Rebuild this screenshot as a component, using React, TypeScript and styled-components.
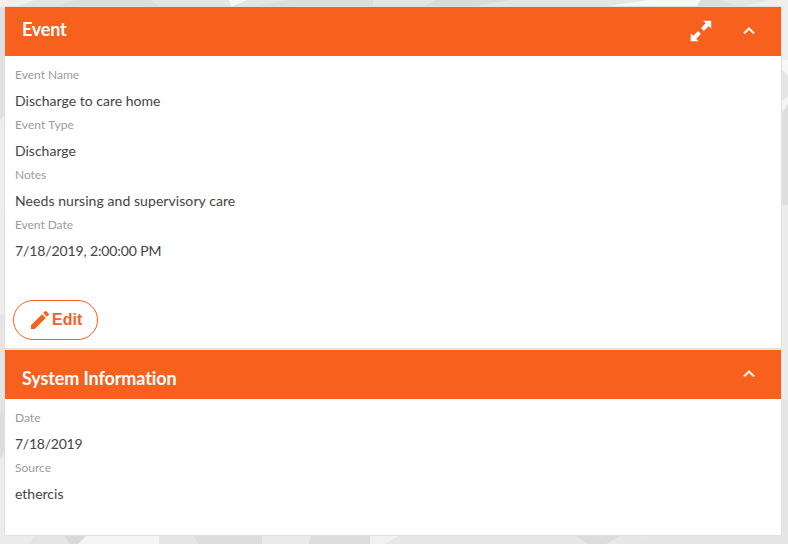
import React from 'react';
import styled, { createGlobalStyle } from 'styled-components';

const GlobalStyle = createGlobalStyle`
  * { box-sizing: border-box; }
  body { margin: 0; background: #e5e5e5; font-family: Lato, "Liberation Sans", sans-serif; font-variant-ligatures: none; }
`;

const Page = styled.main`
  position: relative;
  width: 788px;
  height: 544px;
  padding: 6px 6px 8px 4px;
  overflow: hidden;
`;

const Backdrop = styled.svg`
  position: absolute;
  inset: 0;
  z-index: -1;
`;

const Card = styled.article`
  height: 530px;
  border: 1px solid #e0e0e0;
  border-radius: 2px;
  background: #fff;
`;

const Header = styled.header`
  display: flex;
  align-items: center;
  height: 49px;
  padding: 0 22px 0 16px;
  background: #f7601d;
  color: #fff;
`;

const Title = styled.h2<{ $top?: number; $bottom?: number; $spacing: number }>`
  flex: 1;
  margin: 0;
  padding: ${(p) => p.$top ?? 0}px 0 ${(p) => p.$bottom ?? 0}px 1px;
  font-size: 18px;
  font-weight: 700;
  line-height: 24px;
  letter-spacing: ${(p) => p.$spacing}px;
`;

const HeaderButton = styled.button<{ $gap?: number; $lift?: number }>`
  display: flex;
  padding: 0;
  margin: 0 ${(p) => p.$gap ?? 0}px ${(p) => p.$lift ?? 0}px 0;
  border: 0;
  background: none;
  color: inherit;
`;

const Details = styled.dl<{ $height: number }>`
  height: ${(p) => p.$height}px;
  margin: 0;
  padding: 7px 10px 0;
`;

const Field = styled.div`
  height: 50px;
`;

const Label = styled.dt<{ $spacing: number }>`
  height: 24px;
  color: #9b9b9b;
  font-size: 12px;
  line-height: 24px;
  letter-spacing: ${(p) => p.$spacing}px;
`;

const Value = styled.dd<{ $spacing: number }>`
  margin: 0;
  color: #444;
  font-size: 14px;
  line-height: 28px;
  letter-spacing: ${(p) => p.$spacing}px;
`;

const Actions = styled.div`
  height: 58px;
  padding: 8px 8px 0;
  border-bottom: 2px solid #e2e2e2;
`;

const EditButton = styled.button`
  display: flex;
  align-items: center;
  width: 85px;
  height: 40px;
  padding: 0 0 0 14px;
  border: 1px solid #f7601d;
  border-radius: 20px;
  background: #fff;
  color: #f7601d;
  font: 700 16px "Liberation Sans", sans-serif;
`;

const Chevron = () => (
  <svg width="20" height="20" viewBox="0 0 24 24" fill="currentColor">
    <path d="M12 7.6l-6.6 6.6 1.4 1.4L12 10.4l5.2 5.2 1.4-1.4z" stroke="currentColor" strokeWidth=".4" />
  </svg>
);

const Expand = () => (
  <svg width="22" height="22" viewBox="0 0 22 22" fill="currentColor">
    <path d="M13.2.7h8v8l-2.5-2.4-4.9 4.6-2.8-2.8 4.7-4.9z" />
    <path d="M.7 13.2v8h8l-2.4-2.5 4.6-4.9-2.8-2.8-4.9 4.7z" />
  </svg>
);

const Pencil = () => (
  <svg width="24" height="24" viewBox="0 0 24 24" fill="currentColor">
    <path d="M3 17.25V21h3.75L17.81 9.94l-3.75-3.75zM20.71 7.04a1 1 0 0 0 0-1.41l-2.34-2.34a1 1 0 0 0-1.41 0l-1.83 1.83 3.75 3.75z" />
  </svg>
);

type Entry = { label: string; value: string; labelSpacing: number; valueSpacing: number };

const eventFields: Entry[] = [
  { label: 'Event Name', value: 'Discharge to care home', labelSpacing: 0, valueSpacing: 0.02 },
  { label: 'Event Type', value: 'Discharge', labelSpacing: 0.1, valueSpacing: 0 },
  { label: 'Notes', value: 'Needs nursing and supervisory care', labelSpacing: -0.05, valueSpacing: 0.07 },
  { label: 'Event Date', value: '7/18/2019, 2:00:00 PM', labelSpacing: -0.05, valueSpacing: -0.12 },
];

const systemFields: Entry[] = [
  { label: 'Date', value: '7/18/2019', labelSpacing: 0, valueSpacing: -0.25 },
  { label: 'Source', value: 'ethercis', labelSpacing: 0, valueSpacing: 0 },
];

const Fields = ({ entries, height }: { entries: Entry[]; height: number }) => (
  <Details $height={height}>
    {entries.map((e) => (
      <Field key={e.label}>
        <Label $spacing={e.labelSpacing}>{e.label}</Label>
        <Value $spacing={e.valueSpacing}>{e.value}</Value>
      </Field>
    ))}
  </Details>
);

const facets: [string, string][] = [
  ['0,0 35,0 15,7 0,7', '#f0f0f0'],
  ['52,7 76,0 150,0 160,7', '#dddddd'],
  ['229,0 247,0 231,7', '#f8f8f8'],
  ['250,7 290,0 373,0 373,7', '#dddddd'],
  ['423,7 436,0 510,0 470,7', '#dadada'],
  ['600,7 650,0 700,0 697,7', '#f7f7f7'],
  ['697,7 701,0 720,0 740,7', '#dddddd'],
  ['740,7 770,0 788,0 788,7', '#efefef'],
  ['0,7 5,7 5,115 0,120', '#e0e0e0'],
  ['0,120 5,115 5,208 0,216', '#eeeeee'],
  ['0,216 5,210 5,315 0,315', '#ededed'],
  ['0,415 5,400 5,453 0,458', '#dddddd'],
  ['0,458 5,453 5,544 0,544', '#ececec'],
  ['781,7 788,7 788,60 781,60', '#eeeeee'],
  ['781,60 788,60 788,76 781,68', '#f7f7f7'],
  ['781,102 788,96 788,104 781,115', '#f4f4f4'],
  ['781,115 788,104 788,205 781,205', '#dfdfdf'],
  ['781,205 788,205 788,400 781,400', '#ececec'],
  ['0,535 36,535 28,544 0,544', '#ececec'],
  ['64,535 86,535 78,544 70,544', '#d9d9d9'],
  ['78,544 88,535 159,535 159,544', '#f5f5f5'],
  ['193,535 262,535 262,544 198,544', '#dddddd'],
  ['262,535 311,535 309,544 262,544', '#eaeaea'],
  ['311,535 370,535 370,544 309,544', '#dddddd'],
  ['370,535 400,535 385,544 370,544', '#f1f1f1'],
  ['400,535 650,535 640,544 385,544', '#e7e7e7'],
  ['574,535 622,535 606,544 588,544', '#dcdcdc'],
];

export default function App() {
  return (
    <Page>
      <GlobalStyle />
      <Backdrop width="788" height="544" aria-hidden="true">
        <rect width="788" height="544" fill="#e5e5e5" />
        {facets.map(([points, fill]) => (
          <polygon key={points} points={points} fill={fill} />
        ))}
      </Backdrop>
      <Card>
        <Header>
          <Title $bottom={5} $spacing={-0.2}>Event</Title>
          <HeaderButton $gap={27} $lift={2} aria-label="Expand"><Expand /></HeaderButton>
          <HeaderButton $lift={1} aria-label="Collapse event"><Chevron /></HeaderButton>
        </Header>
        <Fields entries={eventFields} height={236} />
        <Actions>
          <EditButton><Pencil />Edit</EditButton>
        </Actions>
        <Header>
          <Title $top={6} $spacing={-0.12}>System Information</Title>
          <HeaderButton $lift={1} aria-label="Collapse system information"><Chevron /></HeaderButton>
        </Header>
        <Fields entries={systemFields} height={134} />
      </Card>
    </Page>
  );
}
